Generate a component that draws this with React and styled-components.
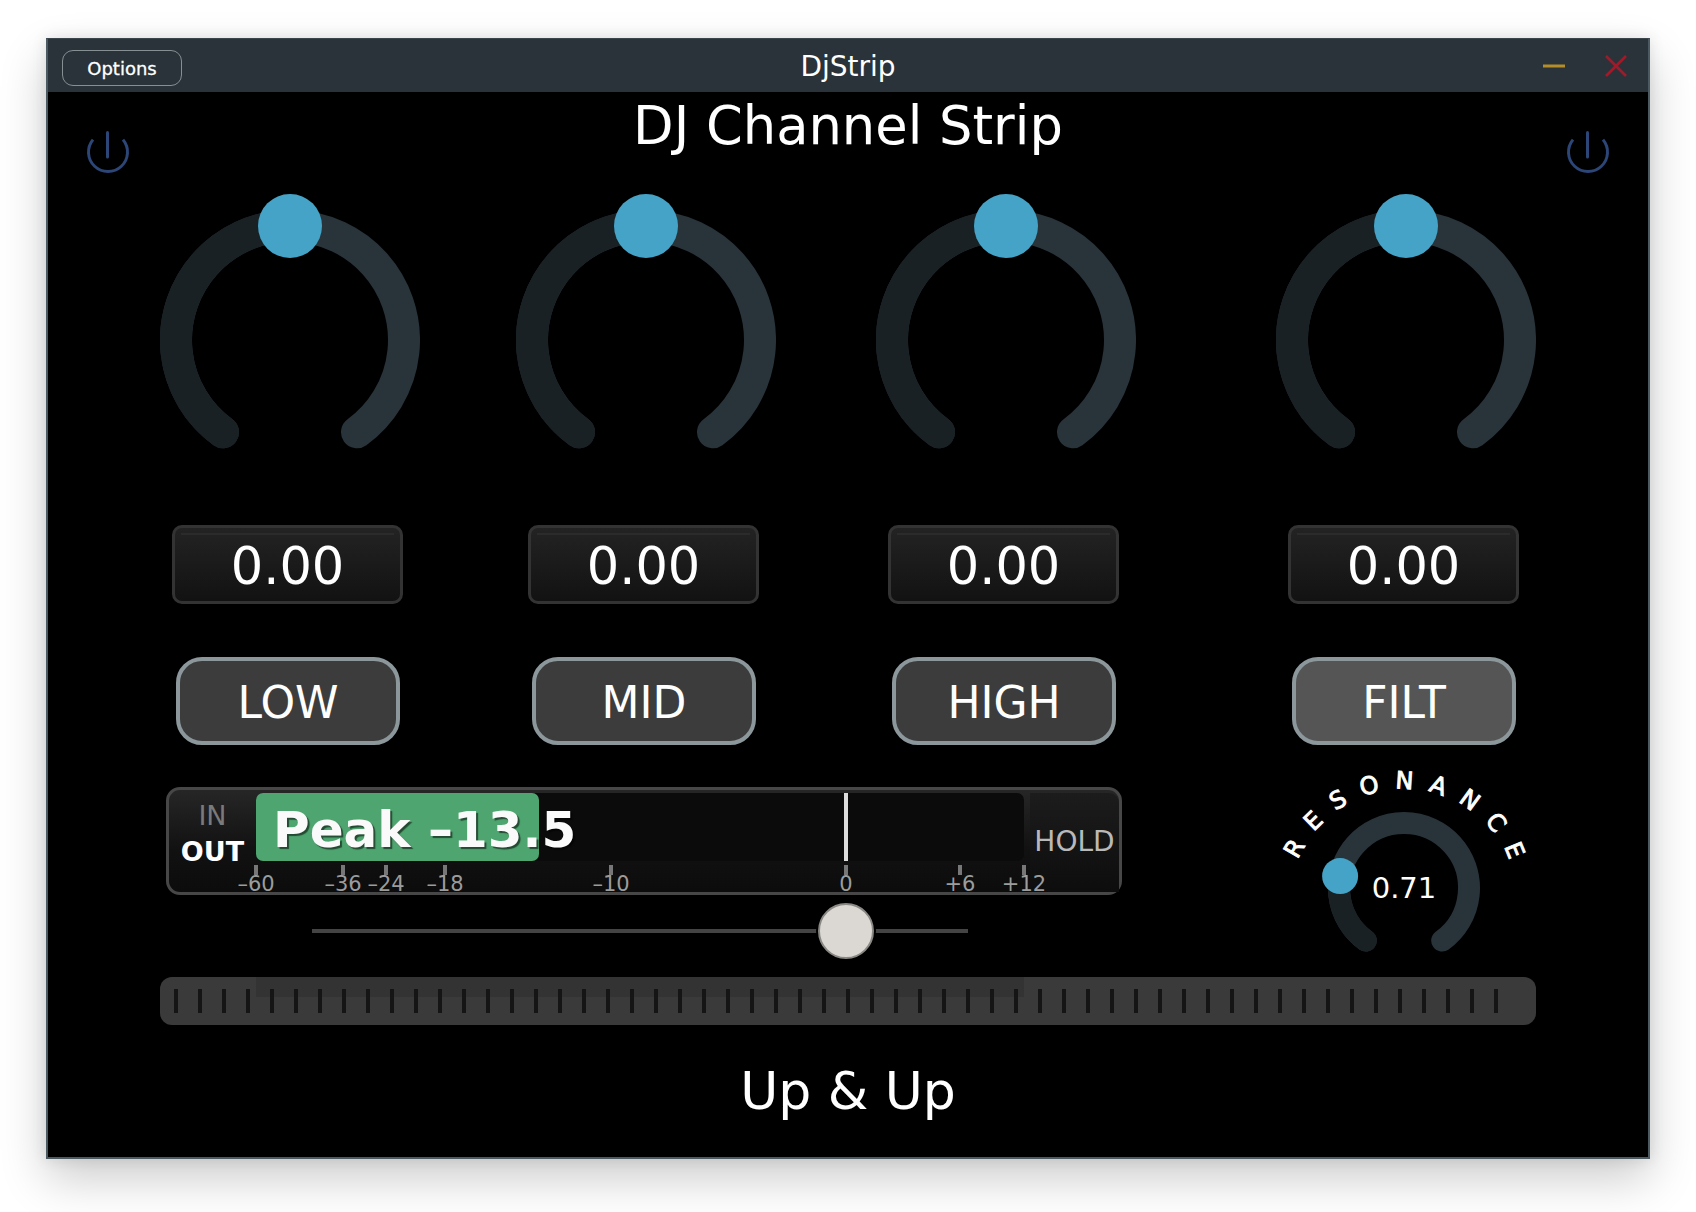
import React from "react";
import styled, { createGlobalStyle } from "styled-components";

const FONT = `"DejaVu Sans", "Noto Sans", sans-serif`;

const Global = createGlobalStyle`
  html, body { margin: 0; padding: 0; background: #fff; }
  body { font-family: ${FONT}; width: 1696px; height: 1212px; overflow: hidden; }
  * { box-sizing: border-box; }
`;

const Page = styled.div`
  padding: 38px 46px;
`;
const Window = styled.div`
  width: 1604px;
  height: 1121px;
  display: flex;
  flex-direction: column;
  background: #000;
  border: 2px solid #4b5962;
  border-top: 1px solid #3a454c;
  box-shadow: 0 20px 44px rgba(0, 0, 0, 0.2), 0 0 14px rgba(0, 0, 0, 0.1);
`;
const TitleBar = styled.div`
  height: 53px;
  flex: none;
  display: grid;
  grid-template-columns: 1fr auto 1fr;
  align-items: center;
  background: #293339;
  padding: 0 21px;
`;
const OptionsButton = styled.button`
  justify-self: start;
  width: 120px;
  height: 36px;
  margin: 5px 0 0 -7px;
  border: 1.5px solid #868f92;
  border-radius: 11px;
  background: transparent;
  color: #fff;
  font: 400 18px ${FONT};
  -webkit-text-stroke: 0.3px #fff;
  padding: 0;
`;
const WindowTitle = styled.div`
  color: #fff;
  font-size: 28px;
  padding-top: 2px;
`;
const WindowControls = styled.div`
  justify-self: end;
  display: flex;
  align-items: center;
  gap: 40px;
`;
const ControlIcon = styled.svg`
  display: block;
  width: 22px;
  height: 22px;
`;

const Header = styled.div`
  height: 98px;
  flex: none;
  display: grid;
  grid-template-columns: 1fr auto 1fr;
  padding: 0 38px;
`;
const MainTitle = styled.h1`
  margin: 0;
  color: #fff;
  font-size: 52.7px;
  font-weight: 400;
  line-height: 68px;
`;
const PowerIcon = styled.svg`
  display: block;
  width: 44px;
  height: 44px;
  margin-top: 39px;
  justify-self: ${(p) => p.$side};
`;

const Channels = styled.div`
  display: grid;
  grid-template-columns: 356px 360px 400px 260px;
  padding-left: 112px;
  flex: none;
`;
const Channel = styled.div`
  width: 260px;
  display: flex;
  flex-direction: column;
  align-items: center;
`;
const KnobSvg = styled.svg`
  display: block;
  flex: none;
`;
const ValueBox = styled.div`
  position: relative;
  width: 231px;
  height: 79px;
  margin: 64px 5px 0 0;
  display: flex;
  align-items: center;
  justify-content: center;
  border: 3px solid #333;
  border-radius: 10px;
  background: linear-gradient(#232323, #121212);
  color: #fff;
  font-size: 51px;
  padding-top: 4px;

  &::before {
    content: "";
    position: absolute;
    top: 5px;
    left: 6px;
    right: 6px;
    height: 2px;
    background: #2b2b2b;
  }
`;
const ChannelButton = styled.button`
  width: 224px;
  height: 88px;
  margin: 53px 4px 0 0;
  border: 4px solid #8b979b;
  border-radius: 26px;
  background: ${(p) => (p.$active ? "#555555" : "#3c3c3c")};
  color: #fff;
  font: 400 44px ${FONT};
  padding: 2px 0 0;
`;

const LowerRow = styled.div`
  height: 203px;
  flex: none;
  margin-top: 11px;
  display: flex;
  padding-left: 118px;
`;
const MeterColumn = styled.div`
  width: 956px;
  padding-top: 31px;
`;
const Meter = styled.div`
  position: relative;
  height: 108px;
  display: flex;
  border: 3px solid #474747;
  border-radius: 14px;
  background: linear-gradient(#262626, #111 60%, #0c0c0c);
  padding-top: 3px;
`;
const IoColumn = styled.div`
  width: 87px;
  flex: none;
  display: flex;
  flex-direction: column;
  align-items: center;
  padding-top: 5px;
`;
const IoLabel = styled.div`
  font-size: 27px;
  line-height: 36px;
  color: ${(p) => (p.$on ? "#fff" : "#7a7a7a")};
  font-weight: ${(p) => (p.$on ? 700 : 400)};
`;
const BarArea = styled.div`
  position: relative;
  width: 768px;
  height: 68px;
  flex: none;
  border-radius: 7px;
  background: #0b0b0b;
`;
const BarFill = styled.div`
  height: 100%;
  border-radius: 7px;
  background: #4ea56f;
`;
const PeakText = styled.div`
  position: absolute;
  left: 17px;
  top: 4px;
  line-height: 66px;
  font-size: 50px;
  font-weight: 700;
  color: #fafafa;
  text-shadow: 2px 2px 1px rgba(0, 0, 0, 0.55);
  white-space: nowrap;
`;
const ZeroLine = styled.div`
  position: absolute;
  top: 0;
  bottom: 0;
  width: 4px;
  margin-left: -2px;
  background: #ddd;
`;
const HoldPanel = styled.div`
  flex: 1;
  margin-left: 6px;
  display: flex;
  justify-content: center;
  padding-top: 31px;
  border-top-right-radius: 10px;
  background: linear-gradient(#1c1c1c, #0d0d0d);
  color: #b9b9b9;
  font-size: 28px;
  line-height: 36px;
`;
const Tick = styled.div`
  position: absolute;
  top: 75px;
  width: 4px;
  height: 10px;
  margin-left: -2px;
  background: #777;
`;
const TickLabel = styled.div`
  position: absolute;
  top: 82px;
  transform: translateX(-50%);
  color: #9c9c9c;
  font-size: 21px;
  line-height: 24px;
  white-space: nowrap;
`;
const SliderBox = styled.div`
  position: relative;
  height: 56px;
  margin: 8px 0 0 146px;
  width: 656px;
  display: flex;
  align-items: center;
`;
const SliderTrack = styled.div`
  width: 100%;
  height: 4px;
  background: #444;
`;
const SliderThumb = styled.div`
  position: absolute;
  left: 506px;
  top: 0;
  width: 56px;
  height: 56px;
  border-radius: 50%;
  background: #dbd8d3;
  border: 2px solid #8a8884;
  box-shadow: 0 0 0 2px #000;
`;
const ResonanceBox = styled.div`
  margin: -1px 0 0 132px;
  width: 300px;
  height: 200px;
  flex: none;
`;

const Strip = styled.div`
  position: relative;
  flex: none;
  width: 1376px;
  height: 48px;
  margin: 18px 0 0 112px;
  padding: 12px 0 0 14px;
  display: flex;
  gap: 20px;
  border-radius: 12px;
  background: #3a3a3a;
`;
const StripShade = styled.div`
  position: absolute;
  left: 96px;
  width: 768px;
  top: 0;
  height: 20px;
  background: #333;
`;
const StripTick = styled.div`
  position: relative;
  flex: none;
  width: 4px;
  height: 24px;
  background: #151515;
`;
const Footer = styled.div`
  margin-top: 34px;
  text-align: center;
  color: #fff;
  font-size: 52px;
  line-height: 64px;
`;

const toXY = (cx, cy, r, deg) => {
  const a = (deg * Math.PI) / 180;
  return [cx + r * Math.sin(a), cy - r * Math.cos(a)];
};
const arc = (cx, cy, r, from, to) => {
  const [x1, y1] = toXY(cx, cy, r, from);
  const [x2, y2] = toXY(cx, cy, r, to);
  const large = Math.abs(to - from) > 180 ? 1 : 0;
  return `M${x1} ${y1}A${r} ${r} 0 ${large} 1 ${x2} ${y2}`;
};

const Knob = ({ w, h, cx, cy, r, stroke, thumb, angle, children }) => {
  const [tx, ty] = toXY(cx, cy, r, angle);
  return (
    <KnobSvg width={w} height={h} viewBox={`0 0 ${w} ${h}`}>
      <path d={arc(cx, cy, r, -144, 144)} fill="none" stroke="#29343a" strokeWidth={stroke} strokeLinecap="round" />
      <path d={arc(cx, cy, r, -144, angle)} fill="none" stroke="#192125" strokeWidth={stroke} strokeLinecap="round" />
      <circle cx={tx} cy={ty} r={thumb} fill="#45a3c7" />
      {children}
    </KnobSvg>
  );
};

const Power = ({ side }) => (
  <PowerIcon $side={side} viewBox="0 0 44 44" fill="none" stroke="#2c4677" strokeWidth="3">
    <path d="M7 8.6A19.5 19.5 0 1 0 37 8.6" />
    <path d="M21.5 1.5V26" strokeLinecap="round" />
  </PowerIcon>
);

const CHANNELS = [
  { name: "LOW" },
  { name: "MID" },
  { name: "HIGH" },
  { name: "FILT", active: true },
];
const TICKS = [
  ["–60", 87],
  ["–36", 174],
  ["–24", 217],
  ["–18", 276],
  ["–10", 442],
  ["0", 677],
  ["+6", 791],
  ["+12", 855],
];

export default function App() {
  return (
    <>
      <Global />
      <Page>
        <Window>
          <TitleBar>
            <OptionsButton>Options</OptionsButton>
            <WindowTitle>DjStrip</WindowTitle>
            <WindowControls>
              <ControlIcon viewBox="0 0 22 22">
                <path d="M0 11H22" stroke="#b58e28" strokeWidth="3" />
              </ControlIcon>
              <ControlIcon viewBox="0 0 22 22">
                <path d="M1 1L21 21M21 1L1 21" stroke="#a11a2a" strokeWidth="2.6" />
              </ControlIcon>
            </WindowControls>
          </TitleBar>
          <Header>
            <Power side="start" />
            <MainTitle>DJ Channel Strip</MainTitle>
            <Power side="end" />
          </Header>
          <Channels>
            {CHANNELS.map((c) => (
              <Channel key={c.name}>
                <Knob w={260} h={271} cx={130} cy={150} r={114} stroke={32} thumb={32} angle={0} />
                <ValueBox>0.00</ValueBox>
                <ChannelButton $active={c.active}>{c.name}</ChannelButton>
              </Channel>
            ))}
          </Channels>
          <LowerRow>
            <MeterColumn>
              <Meter>
                <IoColumn>
                  <IoLabel>IN</IoLabel>
                  <IoLabel $on>OUT</IoLabel>
                </IoColumn>
                <BarArea>
                  <BarFill style={{ width: `${(283 / 768) * 100}%` }} />
                  <PeakText>Peak –13.5</PeakText>
                  <ZeroLine style={{ left: 590 }} />
                </BarArea>
                <HoldPanel>HOLD</HoldPanel>
                {TICKS.map(([label, x]) => (
                  <React.Fragment key={label}>
                    <Tick style={{ left: x }} />
                    <TickLabel style={{ left: x }}>{label}</TickLabel>
                  </React.Fragment>
                ))}
              </Meter>
              <SliderBox>
                <SliderTrack />
                <SliderThumb />
              </SliderBox>
            </MeterColumn>
            <ResonanceBox>
              <Knob w={300} h={200} cx={150} cy={133} r={65} stroke={22} thumb={18} angle={-79.4}>
                <path id="res-arc" d={arc(150, 148, 114, -100, 100)} fill="none" />
                <text fill="#fff" stroke="#fff" strokeWidth="0.9" fontSize="24" fontFamily="DejaVu Sans, sans-serif" letterSpacing="15" textAnchor="middle">
                  <textPath href="#res-arc" startOffset="51.9%">RESONANCE</textPath>
                </text>
                <text x="150" y="143" fill="#fff" fontSize="29" fontFamily="DejaVu Sans, sans-serif" textAnchor="middle">0.71</text>
              </Knob>
            </ResonanceBox>
          </LowerRow>
          <Strip>
            <StripShade />
            {Array.from({ length: 56 }, (_, i) => (
              <StripTick key={i} />
            ))}
          </Strip>
          <Footer>Up &amp; Up</Footer>
        </Window>
      </Page>
    </>
  );
}
